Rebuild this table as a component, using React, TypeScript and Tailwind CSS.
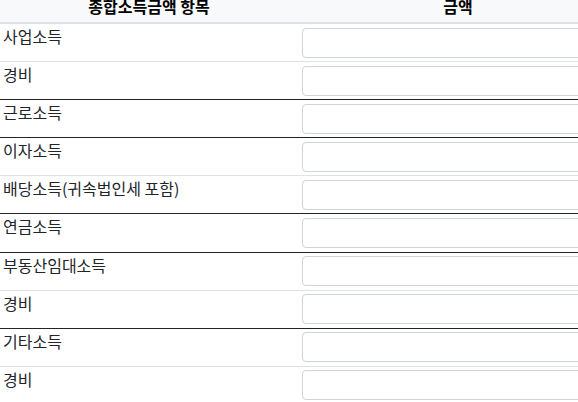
import React from "react";

type Row = { label: string; border: "light" | "dark" };

const rows: Row[] = [
  { label: "사업소득", border: "light" },
  { label: "경비", border: "dark" },
  { label: "근로소득", border: "dark" },
  { label: "이자소득", border: "light" },
  { label: "배당소득(귀속법인세 포함)", border: "dark" },
  { label: "연금소득", border: "dark" },
  { label: "부동산임대소득", border: "light" },
  { label: "경비", border: "dark" },
  { label: "기타소득", border: "light" },
  { label: "경비", border: "light" },
];

export default function App() {
  return (
    <div
      className="w-[578px] h-[402px] overflow-hidden bg-white text-[#212529]"
      style={{ fontFamily: '"Noto Sans CJK KR", "Noto Sans", sans-serif' }}
    >
      <div className="w-[618px] -mt-[10px] text-[16px] leading-[24px]">
        <div className="flex bg-[#f8f9fa] border-b-2 border-[#dee2e6] font-bold text-black">
          <div className="w-[298px] py-[4px] text-center">종합소득금액 항목</div>
          <div className="w-[320px] py-[4px] text-center">금액</div>
        </div>
        {rows.map((r, i) => (
          <div
            key={i}
            className={
              "flex items-start border-b " +
              (r.border === "dark" ? "border-[#212529]" : "border-[#dee2e6]")
            }
          >
            <div className="w-[298px] pl-[3px] pt-0">{r.label}</div>
            <div className="w-[320px] pl-[4px] pr-[4px] py-[3.55px]">
              <input
                type="text"
                className="block w-full h-[30px] rounded-[4px] border border-[#ced4da] bg-white outline-none"
              />
            </div>
          </div>
        ))}
      </div>
    </div>
  );
}
